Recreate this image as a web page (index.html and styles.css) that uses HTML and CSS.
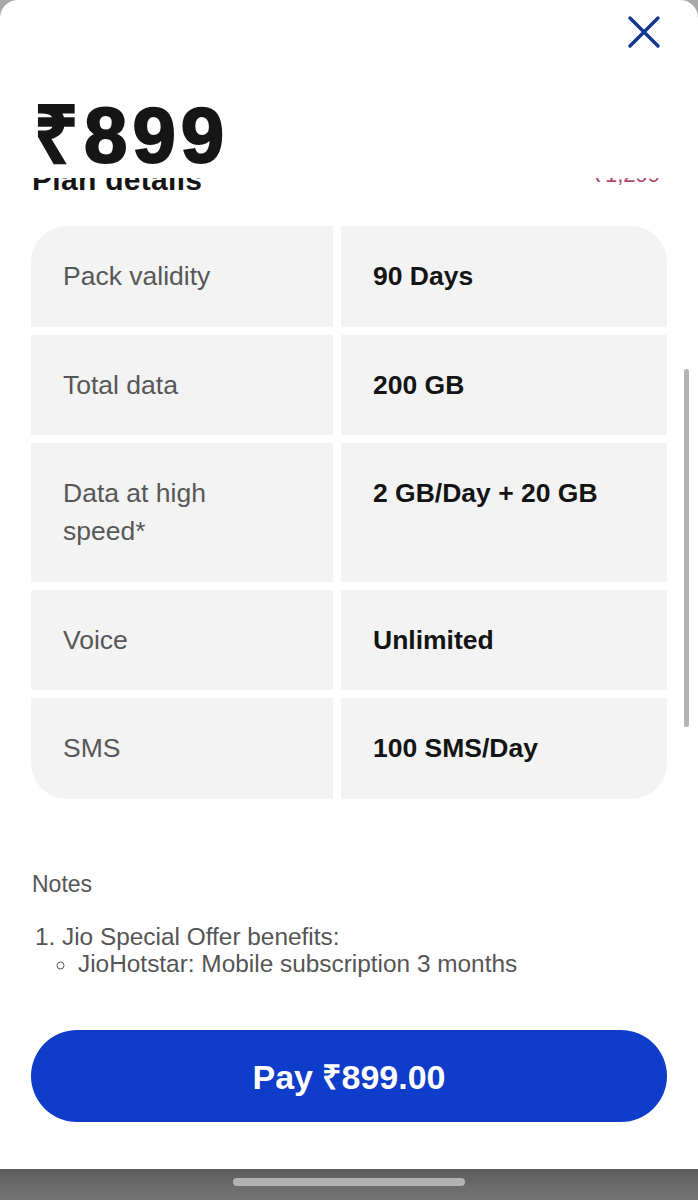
FILE: index.html
```html
<!DOCTYPE html>
<html lang="en">
<head>
  <meta charset="UTF-8">
  <meta name="viewport" content="width=device-width, initial-scale=1.0">
  <title>Plan ₹899</title>
  <link rel="stylesheet" href="styles.css">
</head>
<body>
  <div class="sheet">
    <div class="sheet-header">
      <button class="close-btn" aria-label="Close">
        <svg width="34" height="34" viewBox="0 0 34 34">
          <path d="M3 3 L31 31 M31 3 L3 31" stroke="#14358f" stroke-width="3.4" stroke-linecap="round" fill="none"/>
        </svg>
      </button>
      <h1 class="price">₹899</h1>
    </div>

    <div class="scroll-area">
      <div class="scroll-content">
        <div class="plan-title">
          <h2>Plan details</h2>
          <span class="old-price">₹1,299</span>
        </div>

        <div class="details">
          <div class="cell label">Pack validity</div>
          <div class="cell value">90 Days</div>
          <div class="cell label">Total data</div>
          <div class="cell value">200 GB</div>
          <div class="cell label">Data at high speed*</div>
          <div class="cell value">2 GB/Day + 20 GB</div>
          <div class="cell label">Voice</div>
          <div class="cell value">Unlimited</div>
          <div class="cell label">SMS</div>
          <div class="cell value">100 SMS/Day</div>
        </div>

        <div class="notes">
          <p class="notes-title">Notes</p>
          <ol>
            <li>Jio Special Offer benefits:
              <ul>
                <li>JioHotstar: Mobile subscription 3 months</li>
              </ul>
            </li>
          </ol>
        </div>
      </div>
      <div class="scrollbar"></div>
    </div>

    <div class="sheet-footer">
      <button class="pay-btn">Pay ₹899.00</button>
    </div>
  </div>

  <div class="nav-bar">
    <div class="nav-handle"></div>
  </div>
</body>
</html>
```

FILE: styles.css
```css
body {
  margin: 0;
  padding: 0;
  background: #a8a8a8;
  font-family: "Liberation Sans", Arial, sans-serif;
  color: #141414;
}

.sheet {
  height: 1169px;
  background: #ffffff;
  border-radius: 18px 18px 0 0;
  display: flex;
  flex-direction: column;
  overflow: hidden;
}

.sheet-header {
  height: 178px;
  position: relative;
  flex-shrink: 0;
  padding: 0 34px;
  box-sizing: border-box;
}

.close-btn {
  position: absolute;
  top: 15px;
  right: 37px;
  padding: 0;
  border: none;
  background: none;
  cursor: pointer;
}

.close-btn svg {
  display: block;
}

.price {
  margin: 0;
  padding-top: 96px;
  font-size: 78px;
  line-height: 78px;
  font-weight: 700;
  letter-spacing: 5px;
  -webkit-text-stroke: 2px #161616;
  color: #161616;
}

.scroll-area {
  flex: 1;
  position: relative;
  overflow: hidden;
}

.scroll-content {
  padding: 0 31px;
}

.plan-title {
  display: flex;
  justify-content: space-between;
  align-items: flex-end;
  margin-top: -16px;
  padding: 0 7px 0 1px;
}

.plan-title h2 {
  margin: 0;
  font-size: 30px;
  line-height: 36px;
  font-weight: 700;
  letter-spacing: 0.3px;
}

.old-price {
  font-size: 22px;
  line-height: 22px;
  margin-bottom: 12px;
  color: #b0486e;
  text-decoration: line-through;
}

.details {
  margin-top: 28px;
  display: grid;
  grid-template-columns: 302px 1fr;
  gap: 8px;
  border-radius: 36px;
  overflow: hidden;
}

.cell {
  background: #f3f3f3;
  padding: 31px 32px 31.5px 32px;
  font-size: 26.5px;
  line-height: 38px;
}

.cell.label {
  color: #575757;
  padding-right: 72px;
}

.cell.value {
  font-weight: 700;
  color: #141414;
}

.notes {
  margin-top: 72px;
  color: #555555;
  font-size: 24.4px;
  line-height: 27px;
}

.notes-title {
  margin: 0 0 25px 1px;
  font-size: 23px;
}

.notes ol {
  margin: 0;
  padding-left: 31px;
}

.notes ul {
  margin: 0;
  padding-left: 16px;
  list-style-type: circle;
}

.scrollbar {
  position: absolute;
  top: 191px;
  right: 9px;
  width: 5px;
  height: 358px;
  border-radius: 3px;
  background: #b3b3b3;
}

.sheet-footer {
  flex-shrink: 0;
  padding: 20px 31px 47px;
}

.pay-btn {
  width: 100%;
  height: 92px;
  border: none;
  border-radius: 46px;
  background: #0f3cc9;
  color: #ffffff;
  font-family: "Liberation Sans", Arial, sans-serif;
  font-size: 34px;
  font-weight: 700;
  cursor: pointer;
}

.nav-bar {
  height: 31px;
  background: linear-gradient(#5c5c5c, #767676);
  display: flex;
  justify-content: center;
  padding-top: 9px;
  box-sizing: border-box;
}

.nav-handle {
  width: 232px;
  height: 8px;
  border-radius: 4px;
  background: #b2b2b2;
}
```
